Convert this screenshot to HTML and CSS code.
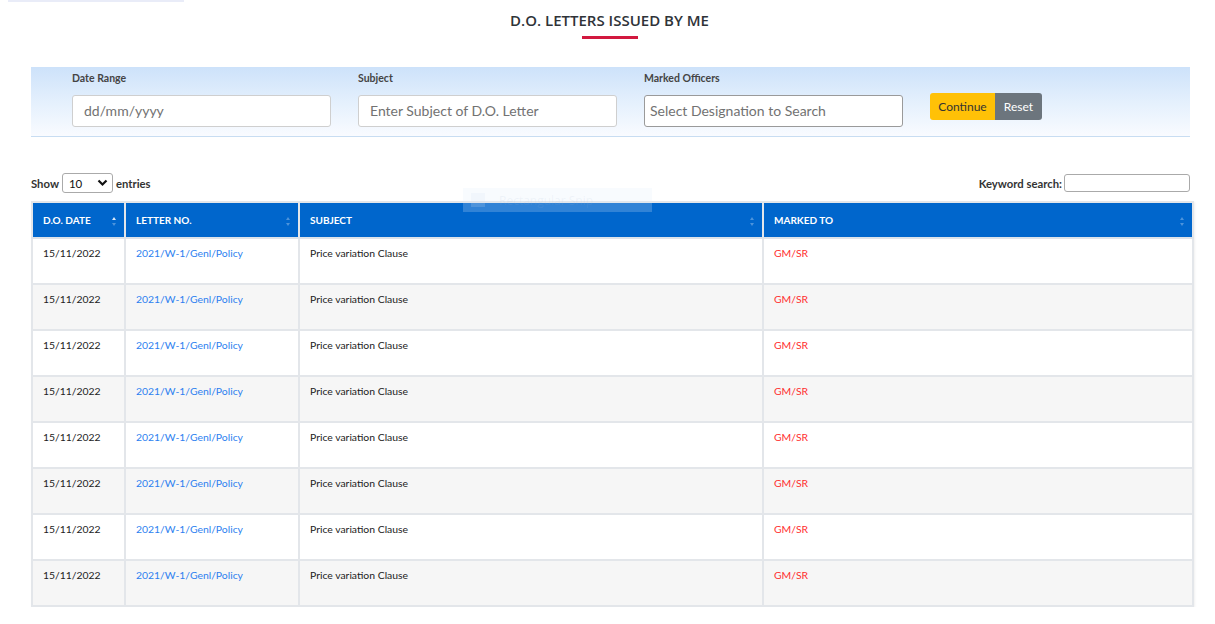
FILE: index.html
```html
<!DOCTYPE html>
<html lang="en">
<head>
<meta charset="utf-8">
<title>D.O. Letters Issued By Me</title>
<link rel="stylesheet" href="styles.css">
</head>
<body>
<div class="topbar"></div>
<div class="page">
  <div class="title-wrap">
    <h1 class="title">D.O. LETTERS ISSUED BY ME</h1>
    <div class="title-line"></div>
  </div>

  <div class="filters">
    <div class="field">
      <label class="flabel">Date Range</label>
      <div class="finput"><span class="ph">dd/mm/yyyy</span></div>
    </div>
    <div class="field">
      <label class="flabel">Subject</label>
      <div class="finput"><span class="ph">Enter Subject of D.O. Letter</span></div>
    </div>
    <div class="field">
      <label class="flabel">Marked Officers</label>
      <div class="finput fselect"><span class="ph">Select Designation to Search</span></div>
    </div>
    <div class="btns">
      <button class="btn btn-continue">Continue</button><button class="btn btn-reset">Reset</button>
    </div>
  </div>

  <div class="tools">
    <div class="show">Show
      <div class="len-select"><span>10</span>
        <svg width="11" height="8" viewBox="0 0 11 8"><path d="M1.5 1.5 L5.5 5.5 L9.5 1.5" fill="none" stroke="#111" stroke-width="2.2"/></svg>
      </div>
      entries</div>
    <div class="search">Keyword search: <div class="search-input"></div></div>
  </div>

  <div class="table-wrap">
    <div class="snip"><span class="snip-ico"></span><span class="snip-text">Rectangular Snip</span></div>
    <table class="dt">
      <colgroup>
        <col class="c1"><col class="c2"><col class="c3"><col class="c4">
      </colgroup>
      <thead>
        <tr>
          <th><div class="th-in"><span>D.O. DATE</span><span class="sort asc"><i class="up"></i><i class="dn"></i></span></div></th>
          <th><div class="th-in"><span>LETTER NO.</span><span class="sort"><i class="up"></i><i class="dn"></i></span></div></th>
          <th><div class="th-in"><span>SUBJECT</span><span class="sort"><i class="up"></i><i class="dn"></i></span></div></th>
          <th><div class="th-in"><span>MARKED TO</span><span class="sort"><i class="up"></i><i class="dn"></i></span></div></th>
        </tr>
      </thead>
      <tbody>
        <tr><td>15/11/2022</td><td><a class="lnk">2021/W-1/Genl/Policy</a></td><td>Price variation Clause</td><td class="red">GM/SR</td></tr>
        <tr><td>15/11/2022</td><td><a class="lnk">2021/W-1/Genl/Policy</a></td><td>Price variation Clause</td><td class="red">GM/SR</td></tr>
        <tr><td>15/11/2022</td><td><a class="lnk">2021/W-1/Genl/Policy</a></td><td>Price variation Clause</td><td class="red">GM/SR</td></tr>
        <tr><td>15/11/2022</td><td><a class="lnk">2021/W-1/Genl/Policy</a></td><td>Price variation Clause</td><td class="red">GM/SR</td></tr>
        <tr><td>15/11/2022</td><td><a class="lnk">2021/W-1/Genl/Policy</a></td><td>Price variation Clause</td><td class="red">GM/SR</td></tr>
        <tr><td>15/11/2022</td><td><a class="lnk">2021/W-1/Genl/Policy</a></td><td>Price variation Clause</td><td class="red">GM/SR</td></tr>
        <tr><td>15/11/2022</td><td><a class="lnk">2021/W-1/Genl/Policy</a></td><td>Price variation Clause</td><td class="red">GM/SR</td></tr>
        <tr><td>15/11/2022</td><td><a class="lnk">2021/W-1/Genl/Policy</a></td><td>Price variation Clause</td><td class="red">GM/SR</td></tr>
      </tbody>
    </table>
  </div>
</div>
</body>
</html>
```

FILE: styles.css
```css
* { box-sizing: border-box; }
html, body { margin: 0; padding: 0; background: #fff; }
body { font-family: Lato, "Open Sans", sans-serif; color: #222; }

.topbar { width: 176px; height: 2px; margin-left: 8px; background: #e9ecf8; }

.page { padding: 0 23px 0 31px; }

.title-wrap { display: flex; flex-direction: column; align-items: center; padding-top: 8px; }
.title { margin: 0; font-family: "Open Sans", sans-serif; font-weight: 600; font-size: 15px; line-height: 20px; color: #2f3338; letter-spacing: 0; padding-right: 4px; }
.title-line { width: 56px; height: 3px; background: #d2183f; margin-top: 6px; margin-right: 4px; }

.filters {
  margin-top: 28px;
  width: 1159px;
  height: 70px;
  padding: 5px 0 0 41px;
  background: linear-gradient(to bottom, #cde2fa 0%, #e6f1fd 55%, #f9fbff 100%);
  border-bottom: 1px solid #c8ddf2;
  display: flex;
  gap: 27px;
}
.field { display: flex; flex-direction: column; width: 259px; }
.flabel { font-size: 10.5px; font-weight: 700; color: #444; line-height: 13px; height: 13px; margin-bottom: 10px; }
.finput {
  height: 32px; border: 1px solid #cfcfcf; border-radius: 3px; background: #fff;
  display: flex; align-items: center; padding-left: 11px; padding-bottom: 2px;
}
.fselect { border-color: #9a9a9a; padding-left: 5px; }
.ph { font-size: 14px; color: #727272; }
.btns { display: flex; padding-top: 21px; }
.btn { height: 27px; border: none; font-family: Lato, sans-serif; font-size: 12px; padding: 0 8px; cursor: pointer; }
.btn-continue { background: #ffc107; color: #333; border-radius: 3px 0 0 3px; width: 65px; }
.btn-reset { background: #6c757d; color: #fff; border-radius: 0 3px 3px 0; width: 47px; }

.tools { margin-top: 36px; width: 1159px; display: flex; justify-content: space-between; align-items: center; font-size: 11.3px; font-weight: 700; color: #333; height: 20px; }
.show { display: flex; align-items: center; gap: 3px; }
.len-select { width: 51px; height: 20px; border: 1px solid #aaa; border-radius: 3px; display: flex; align-items: center; justify-content: space-between; padding: 0 4px 0 6px; font-weight: 400; font-size: 11.5px; color: #111; }
.search { display: flex; align-items: center; gap: 2px; }
.search-input { width: 126px; height: 18px; border: 1px solid #aaa; border-radius: 3px; background: #fff; }

.table-wrap { position: relative; margin-top: 8px; width: 1161px; }
.snip { position: absolute; left: 432px; top: -13px; width: 189px; height: 24px; background: rgba(225, 238, 252, 0.22); display: flex; align-items: center; gap: 14px; padding-left: 8px; z-index: 2; pointer-events: none; }
.snip-ico { width: 14px; height: 14px; background: rgba(210, 225, 245, 0.18); }
.snip-text { font-family: "Open Sans", sans-serif; font-size: 12px; color: rgba(160, 180, 210, 0.12); }

.dt { width: 1161px; border-collapse: collapse; table-layout: fixed; font-size: 10.4px; box-shadow: 1px 1px 2px rgba(0,0,0,0.06); }
.c1 { width: 93px; } .c2 { width: 174px; } .c3 { width: 464px; } .c4 { width: 430px; }
.dt th { background: #0066cc; color: #fff; font-weight: 700; font-size: 10px; text-align: left; height: 36px; padding: 0 8px 0 10px; border: 2px solid #e3e6ea; border-bottom: 2px solid #dde3ea; }
.th-in { display: flex; align-items: center; justify-content: space-between; }
.sort { display: flex; flex-direction: column; gap: 3px; margin-top: 2px; }
.sort i { display: block; width: 0; height: 0; border-left: 2.5px solid transparent; border-right: 2.5px solid transparent; }
.sort .up { border-bottom: 3px solid rgba(255,255,255,0.3); }
.sort .dn { border-top: 3px solid rgba(255,255,255,0.3); }
.sort.asc .up { border-bottom-color: rgba(255,255,255,0.85); }
.dt td { height: 46px; vertical-align: top; padding: 8px 10px 6px; border: 2px solid #e3e6ea; color: #222; line-height: 13px; }
.dt tbody tr:nth-child(even) td { background: #f6f6f6; }
.lnk { color: #2d7ff0; text-decoration: none; }
.red { color: #ff3030; }
.dt td.red { color: #ff3030; }
```
